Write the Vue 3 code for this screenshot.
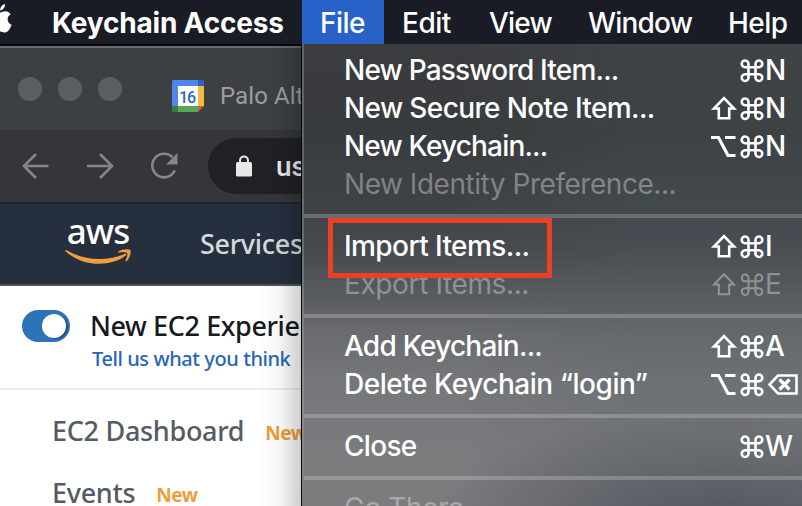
<script setup>
// `track` is the letter spacing of the label, in pixels
const groups = [
  [
    { label: 'New Password Item...', key: 'N', track: -0.8 },
    { label: 'New Secure Note Item...', mod: 'shift', key: 'N', track: -0.62 },
    { label: 'New Keychain...', mod: 'option', key: 'N', track: -0.82 },
    { label: 'New Identity Preference...', off: true, track: -0.46 },
  ],
  [
    { label: 'Import Items...', mod: 'shift', key: 'I', track: -0.58 },
    { label: 'Export Items...', mod: 'shift', key: 'E', off: true, track: -0.38 },
  ],
  [
    { label: 'Add Keychain...', mod: 'shift', key: 'A', track: -0.77 },
    { label: 'Delete Keychain “login”', mod: 'option', key: 'del', track: -0.47 },
  ],
  [{ label: 'Close', key: 'W', track: -0.7 }],
  [{ label: 'Go There', off: true, track: -0.4 }],
]
</script>

<template>
  <div class="screen">
    <header class="menubar">
      <svg class="apple" viewBox="0 0 14 34" width="14" height="34">
        <path d="M0 6.500C.2 2.800 2.200.4 5 0c.3 3.300-1.700 6-5 6.500ZM0 8.500c2.300-.2 3-1.200 5.200-1.200 2.300 0 4.300 1.200 5.400 3-4.400 2.700-3.700 8.700 1 10.500-1.200 3.600-3.800 7.800-6.600 7.800-1.800 0-2.700-1.100-5-1.100Z" fill="#fff" />
      </svg>
      <b class="app-name">Keychain Access</b>
      <span class="top file">File</span>
      <span class="top edit">Edit</span>
      <span class="top view">View</span>
      <span class="top window">Window</span>
      <span class="top help">Help</span>
    </header>

    <div class="body">
      <section class="browser">
        <div class="tabs">
          <i class="light"></i><i class="light"></i><i class="light"></i>
          <svg class="cal" viewBox="0 0 32 32" width="32" height="32">
            <path d="M1.500 0H26v6H6v20H0V1.500Q0 0 1.500 0Z" fill="#4f86ec" />
            <path d="M26 0h4.500Q32 0 32 1.500V6h-6Z" fill="#2a62c4" />
            <path d="M26 6h6v20h-6Z" fill="#f1bc42" />
            <path d="M6 26h20v6H6Z" fill="#58a55c" />
            <path d="M0 26h6v6H1.500Q0 32 0 30.500Z" fill="#3a7d3e" />
            <path d="M26 26h6l-6 6Z" fill="#df5444" />
            <path d="M6 6h20v20H6Z" fill="#fff" />
            <text x="7" y="22.500" class="cal-day" textLength="17">16</text>
          </svg>
          <span class="tab-title">Palo Alto</span>
        </div>
        <div class="toolbar">
          <svg viewBox="0 0 28 28" width="28" height="28" class="nav"><path d="M26.500 14H3M14 2 2 14l12 12" /></svg>
          <svg viewBox="0 0 28 28" width="28" height="28" class="nav"><path d="M1 14h24M14 2l12 12-12 12" /></svg>
          <svg viewBox="0 0 28 28" width="28" height="28" class="nav reload">
            <path d="M22.500 5.300A11.800 11.800 0 1 0 24.800 18.500" />
            <path d="M27.500 1v11.500H16Z" class="solid" />
          </svg>
          <div class="address">
            <svg viewBox="0 0 16 22" width="16" height="22">
              <path d="M4 9V5.500a4 4 0 0 1 8 0V9" fill="none" stroke="#e8e8e8" stroke-width="2" />
              <rect y="7" width="16" height="14.500" rx="1.500" fill="#e8e8e8" />
            </svg>
            <span>us</span>
          </div>
        </div>
        <div class="aws">
          <div class="aws-logo">
            <span>aws</span>
            <svg viewBox="0 0 66 16" width="66" height="16">
              <path d="M.3 2C0 1 .8.7 1.800 1.300 20 12 42 12.500 60 4.800c1.300-.5 2.200.5 1 1.500C46 18.500 17 18 .3 2Z" fill="#eb9f3d" />
              <path d="M53.300 2.500C56 .2 63.500-.4 65.200.8c1.300 1.500-.2 8.500-3.700 11.400-.8.5-1.300.1-1-.7 1-2.500 2.400-6 1.700-7.300-.8-1.300-5-1-7.900-.7-1.100.1-1.600-.4-1-1Z" fill="#eb9f3d" />
            </svg>
          </div>
          <span class="services">Services</span>
        </div>
        <div class="experience">
          <span class="toggle"><i></i></span>
          <div>
            <div class="exp-title">New EC2 Experience</div>
            <div class="exp-link">Tell us what you think</div>
          </div>
        </div>
        <nav class="side">
          <div class="side-row"><span>EC2 Dashboard</span><b>New</b></div>
          <div class="side-row"><span>Events</span><b>New</b></div>
        </nav>
      </section>

      <section class="menu">
        <div v-for="(g, n) in groups" :key="n" class="group">
          <div v-for="it in g" :key="it.label" class="item" :class="{ off: it.off }">
            <span class="label" :style="{ letterSpacing: it.track + 'px' }">{{ it.label }}</span>
            <span v-if="it.key" class="keys">
              <svg v-if="it.mod === 'shift'" viewBox="0 0 26 24" width="26" height="24" class="mod shift">
                <path d="M13 1.200 3 11.500H7.800V21.300h10.400V11.500H23Z" />
              </svg>
              <svg v-if="it.mod === 'option'" viewBox="0 0 26 24" width="26" height="24" class="mod option">
                <path d="M0 2.500h7.500L17 20.500h7.500M14 2.500h10.500" />
              </svg>
              <svg viewBox="0 0 24 24" width="24" height="24" class="cmd">
                <path d="M8.500 8.300V5A3.400 3.400 0 1 0 5 8.300h14a3.400 3.400 0 1 0-3.500-3.300v13.400A3.400 3.400 0 1 0 19 15.200H5a3.400 3.400 0 1 0 3.500 3.200Z" />
              </svg>
              <svg v-if="it.key === 'del'" viewBox="0 0 32 24" width="32" height="24" class="del">
                <path d="M11 2.500H29.500V20.500H11L2.500 11.500Z" /><path d="m12.500 6.500 10 10M22.500 6.500l-10 10" class="thick" />
              </svg>
              <span v-else class="letter">{{ it.key }}</span>
            </span>
          </div>
        </div>
        <div class="highlight"></div>
      </section>
    </div>
  </div>
</template>

<style>
body { margin: 0; overflow: hidden; }
</style>

<style scoped>
.screen { width: 802px; height: 506px; overflow: hidden; font-family: Inter, "Liberation Sans", sans-serif; background: #fff; }
.screen * { box-sizing: border-box; }
svg { display: block; flex: none; overflow: visible; }
span, b { white-space: nowrap; }
.menubar { height: 44px; display: flex; background: #1a1c25; color: #fff; font-size: 28px; line-height: 46px; }
.apple { margin-top: 4px; }
.app-name { width: 250px; margin-left: 38px; font-weight: 700; letter-spacing: -.2px; }
.top { font-weight: 500; letter-spacing: -.5px; }
.file { width: 82px; padding-left: 18px; background: #2862c8; height: 44px; }
.edit { width: 87px; padding-left: 18px; }
.view { width: 100px; padding-left: 18px; letter-spacing: -.8px; }
.window { width: 139px; padding-left: 17px; letter-spacing: -.8px; }
.help { padding-left: 18px; }
.body { display: flex; height: 462px; }
.browser { width: 302px; flex: none; overflow: hidden; position: relative; border-top: 2px solid #050609; border-right: 1px solid #08090b; }
.browser::after { content: ""; position: absolute; inset: 0 0 0 auto; width: 42px; background: linear-gradient(90deg, transparent, rgba(0,0,0,.04) 50%, rgba(0,0,0,.19)); }
.tabs { height: 84px; display: flex; background: #3c4043; border-top: 2px solid #696c6e; padding: 29px 0 0 18px; gap: 16px; }
.light { flex: none; width: 24px; height: 24px; border-radius: 50%; background: #5b5f62; }
.cal { margin: 3px 0 0 34px; }
.cal-day { font: 500 16px Roboto, sans-serif; fill: #2c66c9; }
.tab-title { color: #9a9da0; font: 24px/38px Roboto, sans-serif; letter-spacing: .1px; }
.toolbar { height: 74px; display: flex; align-items: center; background: #35363a; border-bottom: 2px solid #242527; padding: 0 0 0 22px; gap: 36px; }
.nav { fill: none; stroke: #858688; stroke-width: 2.600; }
.nav .solid { fill: #858688; stroke: none; }
.address { width: 300px; flex: none; height: 56px; margin-left: -6px; border-radius: 28px; background: #202124; display: flex; align-items: center; gap: 24px; padding-left: 28px; color: #e8eaed; font: 500 28px Roboto, sans-serif; }
.aws { height: 82px; display: flex; background: #262f3e; border-bottom: 2px solid #50535f; font-family: "Noto Sans", sans-serif; }
.aws-logo { width: 66px; margin-left: 65px; color: #fff; font-size: 35px; font-weight: 500; line-height: 35px; padding: 9px 0 0; letter-spacing: -.9px; text-align: center; }
.aws-logo span { display: block; height: 36px; }
.services { margin-left: 69px; color: #d5dbdb; font-weight: 500; font-size: 27px; line-height: 80px; letter-spacing: -.3px; }
.experience { height: 104px; display: flex; border-bottom: 2px solid #eaeded; padding: 24px 0 0 22px; gap: 20px; background: #fff; font-family: "Noto Sans", sans-serif; }
.toggle { width: 48px; height: 32px; flex: none; border-radius: 16px; background: #2e73b8; padding: 4px 0 0 20px; }
.toggle i { display: block; width: 24px; height: 24px; border-radius: 50%; background: #fff; box-shadow: 2px 1px 1px #204f80; }
.exp-title { color: #16191f; font-size: 27px; line-height: 32px; height: 34px; white-space: nowrap; font-weight: 500; letter-spacing: -.4px; }
.exp-link { color: #2765b8; font-size: 20px; line-height: 30px; margin-left: 2px; white-space: nowrap; font-weight: 500; letter-spacing: -.42px; }
.side { font-family: "Noto Sans", sans-serif; padding: 10px 0 0 52px; }
.side-row { height: 62px; display: flex; color: #545b64; font-size: 27px; font-weight: 500; line-height: 61px; gap: 21px; letter-spacing: -.3px; }
.side-row b { color: #eb9f3d; font-size: 19px; line-height: 67px; letter-spacing: -.5px; }
.menu { position: relative; flex: 1; padding: 8px 0 0; border-left: 2px solid rgba(255,255,255,.18); background: radial-gradient(ellipse 300px 110px at 420px 480px, rgba(76,80,92,.85), rgba(84,88,96,.45) 55%, transparent), linear-gradient(90deg, transparent 150px, rgba(80,92,96,.22) 330px), linear-gradient(#3a3c3e 0, #383b3e 90px, #3f4348 165px, #464a4f 205px, #5a5d60 255px, #6a6c6f 290px, #75777a 340px, #7b7c7e 420px); }
.group + .group { border-top: 4px solid rgba(255,255,255,.21); margin-top: 10px; padding-top: 10px; }
.item { height: 38px; display: flex; justify-content: space-between; padding-left: 40px; color: #fff; font-size: 28px; line-height: 36px; font-weight: 500; }
.off { color: rgba(255,255,255,.36); font-weight: 400; }
.keys { display: flex; width: 92px; height: 38px; justify-content: flex-end; align-items: center; }
.keys path { fill: none; stroke: currentColor; stroke-width: 2.600; }
.keys .option path, .keys .thick { stroke-width: 3.200; }
.off .keys path { stroke-width: 2; }
.mod { margin-right: 3px; }
.cmd { margin-right: 1px; }
.letter { width: 37px; height: 38px; padding-left: 0; letter-spacing: -.5px; }
.del { margin-right: 3px; margin-left: 2px; }
.highlight { position: absolute; left: 24px; top: 174px; width: 224px; height: 60px; border: 5px solid #eb4026; }
</style>
